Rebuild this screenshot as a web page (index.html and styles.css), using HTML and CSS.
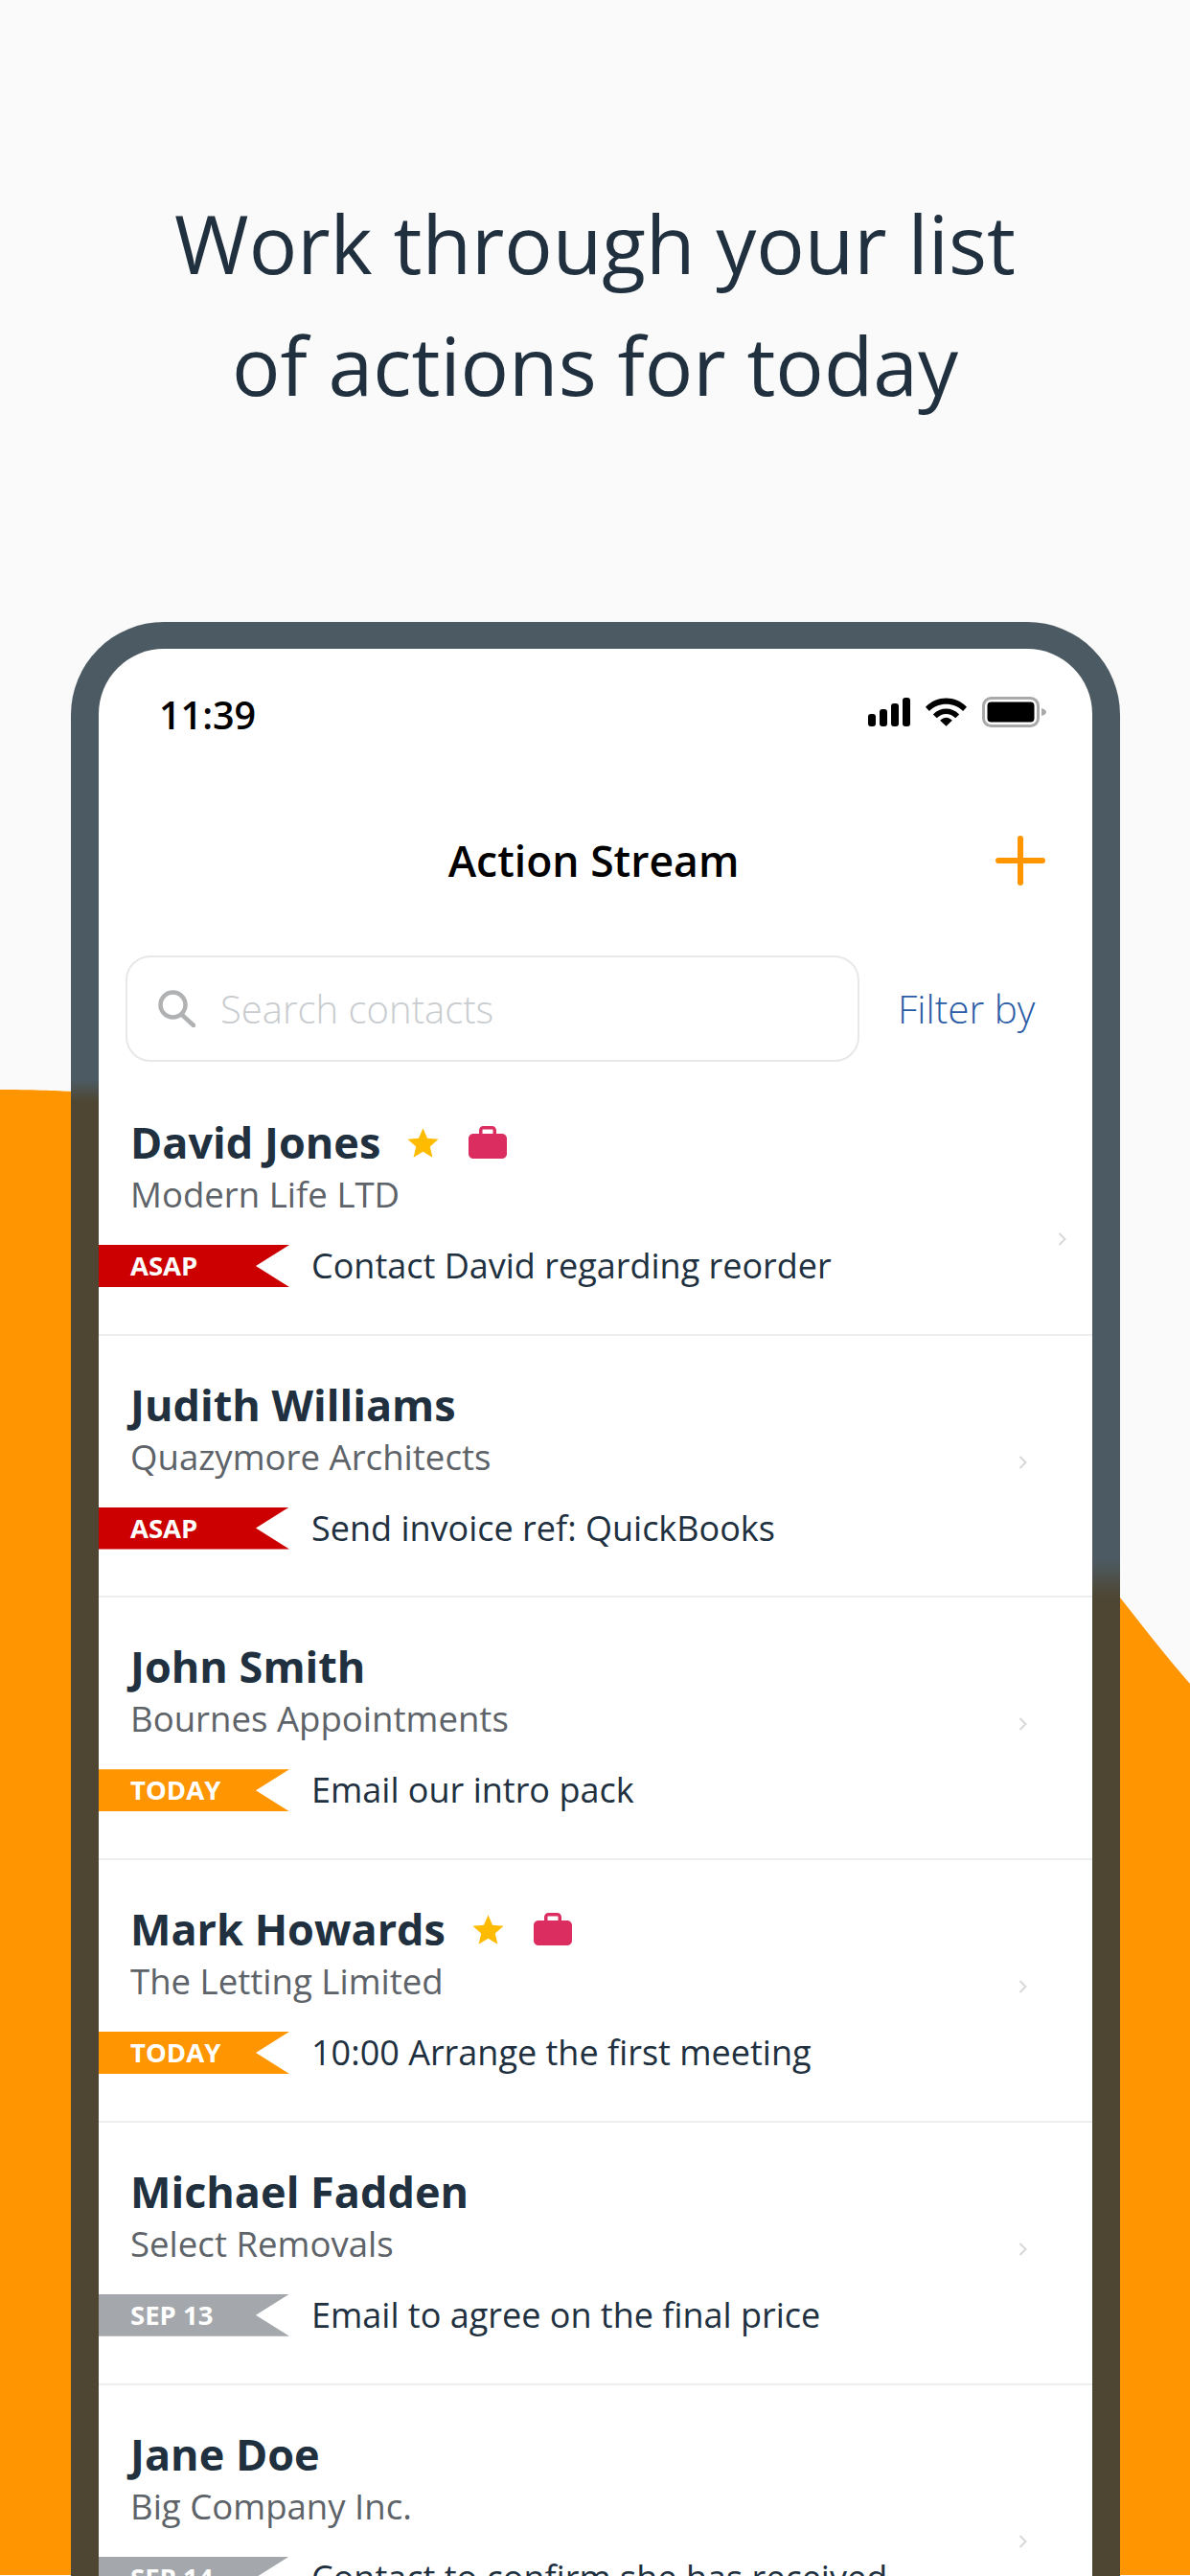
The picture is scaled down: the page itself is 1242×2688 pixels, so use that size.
FILE: index.html
```html
<!DOCTYPE html>
<html lang="en">
<head>
<meta charset="utf-8">
<title>Action Stream</title>
<link rel="stylesheet" href="styles.css">
</head>
<body>
<svg class="blob" viewBox="0 0 1242 1550" preserveAspectRatio="none" aria-hidden="true"><path fill="#ff9500" d="M0 0C30 0 60 1 74 2 C500 30 960 240 1169 530 C1195 563 1220 595 1242 620 V1550 H0 Z"/></svg>
<main class="page">
  <h1 class="headline">Work through your list<br>of actions for today</h1>
  <section class="phone">
    <div class="screen">
      <div class="status">
        <span class="clock">11:39</span>
        <span class="status-icons">
          <svg class="sig" viewBox="0 0 44 30"><rect x="0" y="17" width="8" height="13" rx="3"/><rect x="12" y="12" width="8" height="18" rx="3"/><rect x="24" y="6" width="8" height="24" rx="3"/><rect x="36" y="0" width="8" height="30" rx="3"/></svg>
          <svg class="wifi" viewBox="0 0 44 30"><path d="M0 9.500C12 -3 32 -3 44 9.500L40 14C30 4 14 4 4 14Z"/><path d="M8 17.500C16 9.500 28 9.500 36 17.500L32 21.500C26 15.500 18 15.500 12 21.500Z"/><path d="M15.500 24C20 20 24 20 28.500 24L22 30Z"/></svg>
          <svg class="batt" viewBox="0 0 68 32"><rect x="1.500" y="1.500" width="57" height="29" rx="8" fill="none" stroke="#a9a9a9" stroke-width="3"/><rect x="5.500" y="5.500" width="49" height="21" rx="4"/><path d="M62 12C65 13 67 14 67 16C67 18 65 19 62 20Z" fill="#a9a9a9"/></svg>
        </span>
      </div>
      <header class="nav">
        <h2 class="nav-title">Action Stream</h2>
        <svg class="plus" viewBox="0 0 52 52"><path d="M26 3V49M3 26H49" fill="none" stroke="#ff9500" stroke-width="6" stroke-linecap="round"/></svg>
      </header>
      <div class="searchbar">
        <div class="search">
          <svg class="glass" viewBox="0 0 39 39"><circle cx="15.500" cy="15.500" r="13" fill="none" stroke="#afb1b3" stroke-width="4.500"/><path d="M25 26L37 37" stroke="#afb1b3" stroke-width="4.500" stroke-linecap="round"/></svg>
          <span class="placeholder">Search contacts</span>
        </div>
        <span class="filter">Filter by</span>
      </div>
      <ul class="list">
        <li class="row first">
          <div class="row-body">
            <div class="name-line"><span class="name">David Jones</span>
              <svg class="star" viewBox="0 0 24 24"><path fill="#ffbb00" d="M12 1.500l3.100 7.300 7.900.7-6 5.200 1.800 7.800L12 18.300l-6.800 4.200L7 14.700 1 9.500l7.900-.7z"/></svg>
              <svg class="case" viewBox="0 0 40 34"><path fill="#dc2d60" fill-rule="evenodd" d="M11 8V4.500C11 2 13 0 15.500 0h9C27 0 29 2 29 4.500V8h6c2.800 0 5 2.200 5 5v16c0 2.800-2.200 5-5 5H5c-2.800 0-5-2.200-5-5V13c0-2.800 2.200-5 5-5zM14.500 8h11V4c0-.3-.2-.5-.5-.5H15c-.3 0-.5.200-.5.500z"/></svg>
            </div>
            <div class="company">Modern Life LTD</div>
            <div class="action"><span class="tag red">ASAP</span><span class="task">Contact David regarding reorder</span></div>
          </div>
          <svg class="chev" viewBox="0 0 9 14"><path d="M1.500 1l6 6-6 6" fill="none" stroke="#d6d7d8" stroke-width="2"/></svg>
        </li>
        <li class="row">
          <div class="row-body">
            <div class="name-line"><span class="name">Judith Williams</span></div>
            <div class="company">Quazymore Architects</div>
            <div class="action"><span class="tag red">ASAP</span><span class="task">Send invoice ref: QuickBooks</span></div>
          </div>
          <svg class="chev" viewBox="0 0 9 14"><path d="M1.500 1l6 6-6 6" fill="none" stroke="#d6d7d8" stroke-width="2"/></svg>
        </li>
        <li class="row">
          <div class="row-body">
            <div class="name-line"><span class="name">John Smith</span></div>
            <div class="company">Bournes Appointments</div>
            <div class="action"><span class="tag orange">TODAY</span><span class="task">Email our intro pack</span></div>
          </div>
          <svg class="chev" viewBox="0 0 9 14"><path d="M1.500 1l6 6-6 6" fill="none" stroke="#d6d7d8" stroke-width="2"/></svg>
        </li>
        <li class="row">
          <div class="row-body">
            <div class="name-line"><span class="name">Mark Howards</span>
              <svg class="star" viewBox="0 0 24 24"><path fill="#ffbb00" d="M12 1.500l3.100 7.300 7.900.7-6 5.200 1.800 7.800L12 18.300l-6.800 4.200L7 14.700 1 9.500l7.900-.7z"/></svg>
              <svg class="case" viewBox="0 0 40 34"><path fill="#dc2d60" fill-rule="evenodd" d="M11 8V4.500C11 2 13 0 15.500 0h9C27 0 29 2 29 4.500V8h6c2.800 0 5 2.200 5 5v16c0 2.800-2.200 5-5 5H5c-2.800 0-5-2.200-5-5V13c0-2.800 2.200-5 5-5zM14.500 8h11V4c0-.3-.2-.5-.5-.5H15c-.3 0-.5.200-.5.500z"/></svg>
            </div>
            <div class="company">The Letting Limited</div>
            <div class="action"><span class="tag orange">TODAY</span><span class="task">10:00 Arrange the first meeting</span></div>
          </div>
          <svg class="chev" viewBox="0 0 9 14"><path d="M1.500 1l6 6-6 6" fill="none" stroke="#d6d7d8" stroke-width="2"/></svg>
        </li>
        <li class="row">
          <div class="row-body">
            <div class="name-line"><span class="name">Michael Fadden</span></div>
            <div class="company">Select Removals</div>
            <div class="action"><span class="tag grey">SEP 13</span><span class="task">Email to agree on the final price</span></div>
          </div>
          <svg class="chev" viewBox="0 0 9 14"><path d="M1.500 1l6 6-6 6" fill="none" stroke="#d6d7d8" stroke-width="2"/></svg>
        </li>
        <li class="row last">
          <div class="row-body">
            <div class="name-line"><span class="name">Jane Doe</span></div>
            <div class="company">Big Company Inc.</div>
            <div class="action"><span class="tag grey">SEP 14</span><span class="task">Contact to confirm she has received</span></div>
          </div>
          <svg class="chev" viewBox="0 0 9 14"><path d="M1.500 1l6 6-6 6" fill="none" stroke="#d6d7d8" stroke-width="2"/></svg>
        </li>
      </ul>
    </div>
  </section>
</main>
</body>
</html>
```
FILE: styles.css
```css
* { box-sizing: border-box; }
html, body { margin: 0; padding: 0; }
body {
  width: 1242px;
  height: 2688px;
  overflow: hidden;
  background: #fafafa;
  font-family: "Open Sans", sans-serif;
  position: relative;
}
.blob {
  position: absolute;
  left: 0;
  top: 1137px;
  width: 1242px;
  height: 1550px;
}
.page {
  position: relative;
  height: 2688px;
  overflow: hidden;
}
.headline {
  margin: 0;
  padding-top: 190px;
  height: 649px;
  text-align: center;
  font-weight: 400;
  font-size: 84px;
  line-height: 127px;
  color: #20303f;
}
.phone {
  margin-left: 74px;
  width: 1095px;
  height: 2100px;
  padding: 28px 29px 0;
  border-radius: 97px 97px 0 0;
  background-color: #4c5a63;
  background-image:
    linear-gradient(#4c5a63 0, #4c5a63 478px, #4e4632 501px),
    linear-gradient(#4c5a63 0, #4c5a63 978px, #4e4632 1018px);
  background-size: 29px 100%, 29px 100%;
  background-position: left top, right top;
  background-repeat: no-repeat;
}
.screen {
  height: 2072px;
  background: #fff;
  border-radius: 68px 68px 0 0;
  overflow: hidden;
}
.status {
  height: 156px;
  padding: 46px 47px 0 63px;
  display: flex;
  justify-content: space-between;
  align-items: flex-start;
}
.clock {
  font-size: 39.500px;
  line-height: 46px;
  font-weight: 600;
  color: #000;
}
.status-icons {
  display: flex;
  align-items: center;
  gap: 16px;
  padding-top: 4px;
}
.status-icons svg { display: block; }
.sig { width: 44px; height: 30px; }
.wifi { width: 43px; height: 30px; }
.batt { width: 68px; height: 32px; }
.nav {
  height: 130px;
  position: relative;
  display: flex;
  align-items: center;
  justify-content: center;
  padding-right: 4px;
}
.nav-title {
  margin: 0;
  font-size: 44.500px;
  line-height: 60px;
  font-weight: 600;
  color: #000;
}
.plus {
  position: absolute;
  right: 49px;
  top: 39px;
  width: 52px;
  height: 52px;
}
.searchbar {
  margin-top: 34px;
  display: flex;
  align-items: center;
  padding-left: 28px;
}
.search {
  width: 766px;
  height: 111px;
  border: 2.500px solid #e6e8e9;
  border-radius: 26px;
  display: flex;
  align-items: center;
  padding-left: 32px;
  gap: 26px;
}
.glass { width: 39px; height: 39px; }
.placeholder {
  font-size: 40px;
  font-weight: 300;
  color: #c9cccf;
}
.filter {
  margin-left: 40px;
  font-size: 40.500px;
  font-weight: 300;
  color: #2a5ca6;
}
.list {
  list-style: none;
  margin: 0;
  padding: 0;
}
.row {
  height: 273.750px;
  border-bottom: 2px solid #eceeef;
  display: flex;
  align-items: flex-start;
}
.row.first { height: 285.500px; }
.row-body {
  flex: 1;
  padding-top: 42px;
}
.first .row-body { padding-top: 54px; }
.name-line {
  padding-left: 33px;
  height: 60px;
  display: flex;
  align-items: center;
}
.name {
  font-size: 45px;
  font-weight: 700;
  line-height: 60px;
  color: #20303f;
}
.star { width: 35px; height: 35px; margin-left: 27px; }
.case { width: 40px; height: 34px; margin-left: 30px; }
.company {
  padding-left: 33px;
  font-size: 36.600px;
  line-height: 48px;
  font-weight: 400;
  color: #5d6368;
}
.action {
  margin-top: 29px;
  display: flex;
  align-items: center;
}
.tag {
  width: 199px;
  height: 44px;
  padding-left: 33px;
  font-size: 27.500px;
  line-height: 44px;
  font-weight: 700;
  color: #fff;
  clip-path: polygon(0 0, 100% 0, 164px 50%, 100% 100%, 0 100%);
}
.tag.red { background: #cc0000; }
.tag.orange { background: #ff9500; }
.tag.grey { background: #a4a8ac; }
.task {
  margin-left: 23px;
  font-size: 36px;
  line-height: 44px;
  color: #20303f;
  white-space: nowrap;
}
.chev {
  width: 9px;
  height: 14px;
  margin: 125px 68px 0 0;
  flex: none;
}
.first .chev { margin: 178px 27px 0 0; }
.last .chev { margin-top: 156px; }
```
